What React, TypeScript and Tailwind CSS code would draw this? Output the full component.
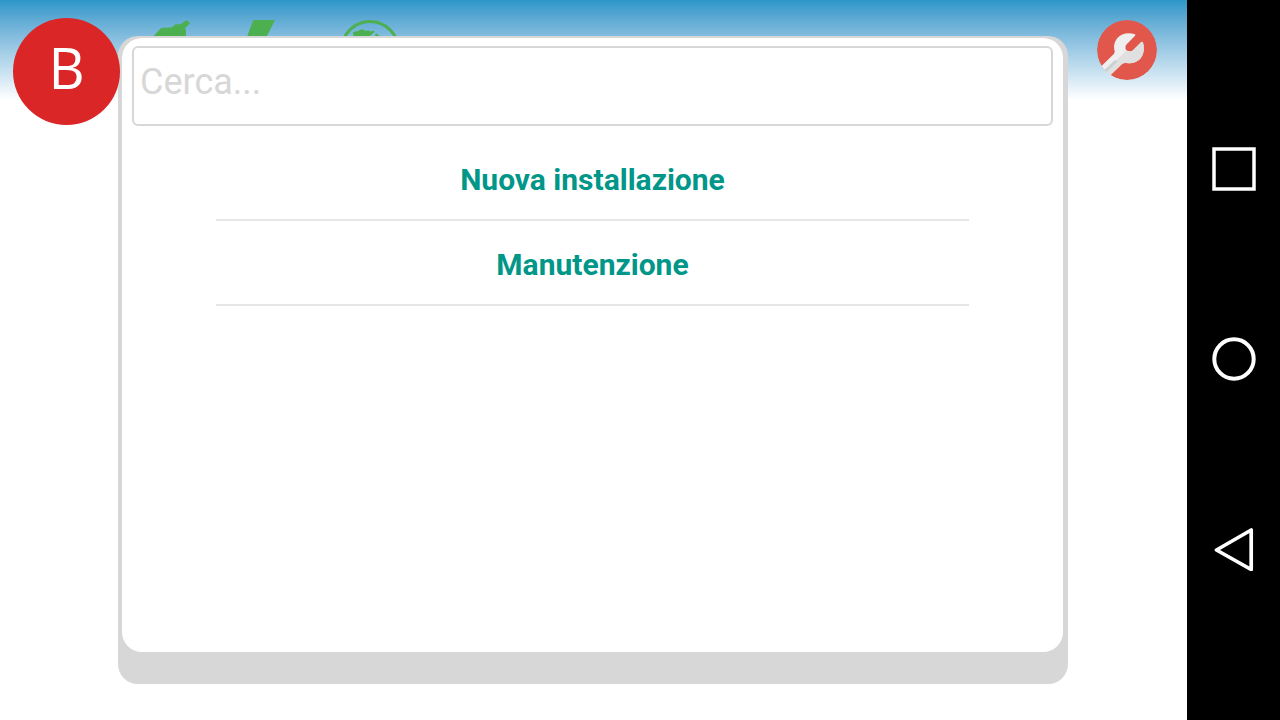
import { useState } from 'react';

interface IconButtonProps {
  label: string;
  children: React.ReactNode;
}

const activities = ['Nuova installazione', 'Manutenzione'];

function IconButton({ label, children }: IconButtonProps) {
  return (
    <button type="button" aria-label={label} className="block shrink-0">
      {children}
    </button>
  );
}

function PlugIcon() {
  return (
    <svg width="60" height="60" viewBox="0 0 60 60" fill="#4caf50">
      <path d="M56.7 0l3.300 3.300-5 5 1 2V22L38 40H24L6 60 0 54l18-20V22l6-6.500 7-7.500 11-.7 3.500-3h5z" />
    </svg>
  );
}

function BoltIcon() {
  return (
    <svg width="60" height="60" viewBox="0 0 60 60" fill="#4caf50">
      <path d="M18.300 0H40l-8 16-4 8h14L18 60l6-26H10l2.300-18z" />
    </svg>
  );
}

function GlobeIcon() {
  return (
    <svg width="60" height="60" viewBox="0 0 60 60">
      <circle cx="30" cy="30" r="28.500" fill="none" stroke="#4caf50" strokeWidth="3" />
      <path
        d="M13 12l5-1 2.500-1.500h3l1.500 1.300 4-.3 1.500 1 3.500-.7.500 1.200-2 1.500-1 1.500-2 1-2 4-7 5-5-4-2-5zM35 14.500l2-1.200 1 1.700 2.500 1v4l-5-3z"
        fill="#4caf50"
      />
    </svg>
  );
}

function WrenchIcon() {
  return (
    <svg width="60" height="60" viewBox="0 0 60 60">
      <clipPath id="badge">
        <circle cx="30" cy="30" r="30" />
      </clipPath>
      <g clipPath="url(#badge)">
        <circle cx="30" cy="30" r="30" fill="#e2574c" />
        <path
          d="M37.500 14C31 12 24 13.500 20.500 18C17 22 16.500 27 17.700 31.500C17.800 32.500 17.500 33.300 16.800 34L3 47.500L12 56.500L25 44C26 43 27.500 42.700 29.500 43C35 43.800 40 42.500 43.500 38.500C47 34 47.600 28 46 22.700C45.500 21.400 44.800 21.400 44 22.200L36.500 29.700C35.500 30.700 34.500 31.200 33 31.200C29.500 31.200 28.500 30.200 28.500 27.500C28.500 26 28.700 25.200 29.700 24.200L37.800 16C38.600 15.200 38.400 14.400 37.500 14Z"
          fill="#efefef"
        />
        <path
          d="M7.500 52L29.700 30.300C30.500 31 31.500 31.200 33 31.200C34.500 31.200 35.500 30.700 36.500 29.700L44 22.200C44.800 21.400 45.500 21.400 46 22.700C47.600 28 47 34 43.500 38.500C40 42.500 35 43.800 29.500 43C27.500 42.700 26 43 25 44L12 56.500Z"
          fill="#e0e0e0"
        />
        <path d="M18.500 41.500L7.500 52" stroke="#cad0d3" strokeWidth="3" strokeLinecap="round" />
      </g>
    </svg>
  );
}

function SystemNav() {
  return (
    <nav className="flex w-[93px] shrink-0 flex-col items-center justify-between bg-black pt-[147px] pb-[149px]">
      <IconButton label="Recenti">
        <svg width="44" height="44" viewBox="0 0 44 44" fill="none" stroke="#fff" strokeWidth="3.500">
          <rect x="2" y="2" width="40" height="40" />
        </svg>
      </IconButton>
      <IconButton label="Home">
        <svg width="44" height="44" viewBox="0 0 44 44" fill="none" stroke="#fff" strokeWidth="4">
          <circle cx="22" cy="22" r="19.700" />
        </svg>
      </IconButton>
      <IconButton label="Indietro">
        <svg
          width="44"
          height="44"
          viewBox="0 0 44 44"
          fill="none"
          stroke="#fff"
          strokeWidth="3.700"
          strokeLinejoin="round"
        >
          <path d="M39.200 3v39.500L4.500 23z" />
        </svg>
      </IconButton>
    </nav>
  );
}

function ActivityDialog() {
  const [query, setQuery] = useState('');
  const visible = activities.filter((a) => a.toLowerCase().includes(query.toLowerCase()));

  return (
    <div
      role="dialog"
      aria-label="Scelta attività"
      className="flex min-w-0 flex-1 rounded-[20px] bg-[#d7d7d7] pt-[2px] pr-[5px] pb-8 pl-1"
    >
      <div className="min-w-0 flex-1 rounded-[20px] bg-white px-[10px] pt-2">
        <input
          type="text"
          aria-label="Cerca"
          placeholder="Cerca..."
          value={query}
          onChange={(e) => setQuery(e.target.value)}
          className="block h-20 w-full rounded-md border-2 border-[#d7d7d7] px-[6px] pb-2 text-[36px] text-gray-700 outline-none placeholder:text-[#d7d7d7]"
        />
        <ul className="mx-[84px] mt-[10px]">
          {visible.map((name) => (
            <li key={name} className="border-b-2 border-[#e6e6e6]">
              <button
                type="button"
                className="h-[83px] w-full pt-1 text-center text-[30px] font-bold text-[#009688]"
              >
                {name}
              </button>
            </li>
          ))}
        </ul>
      </div>
    </div>
  );
}

export default function App() {
  return (
    <div className="flex h-screen bg-white font-['Roboto',sans-serif]">
      <div className="relative min-w-0 flex-1">
        <header className="flex h-[100px] items-start bg-linear-to-b from-[#2b96c9] to-white pt-[18px] pr-[30px] pl-[13px]">
          <button
            type="button"
            aria-label="Profilo"
            className="relative z-20 size-[107px] shrink-0 rounded-full bg-[#da2627] pb-[10px] font-['Open_Sans',sans-serif] text-[56px] leading-none text-white"
          >
            B
          </button>
          <div className="ml-[10px] flex gap-[45px] pt-[2px]">
            <IconButton label="Impianti">
              <PlugIcon />
            </IconButton>
            <IconButton label="Energia">
              <BoltIcon />
            </IconButton>
            <IconButton label="Mappa">
              <GlobeIcon />
            </IconButton>
          </div>
          <div className="relative z-20 ml-auto pt-[2px]">
            <IconButton label="Impostazioni">
              <WrenchIcon />
            </IconButton>
          </div>
        </header>

        <div className="absolute inset-0 z-10 flex py-9 pr-[119px] pl-[118px]">
          <ActivityDialog />
        </div>
      </div>
      <SystemNav />
    </div>
  );
}
